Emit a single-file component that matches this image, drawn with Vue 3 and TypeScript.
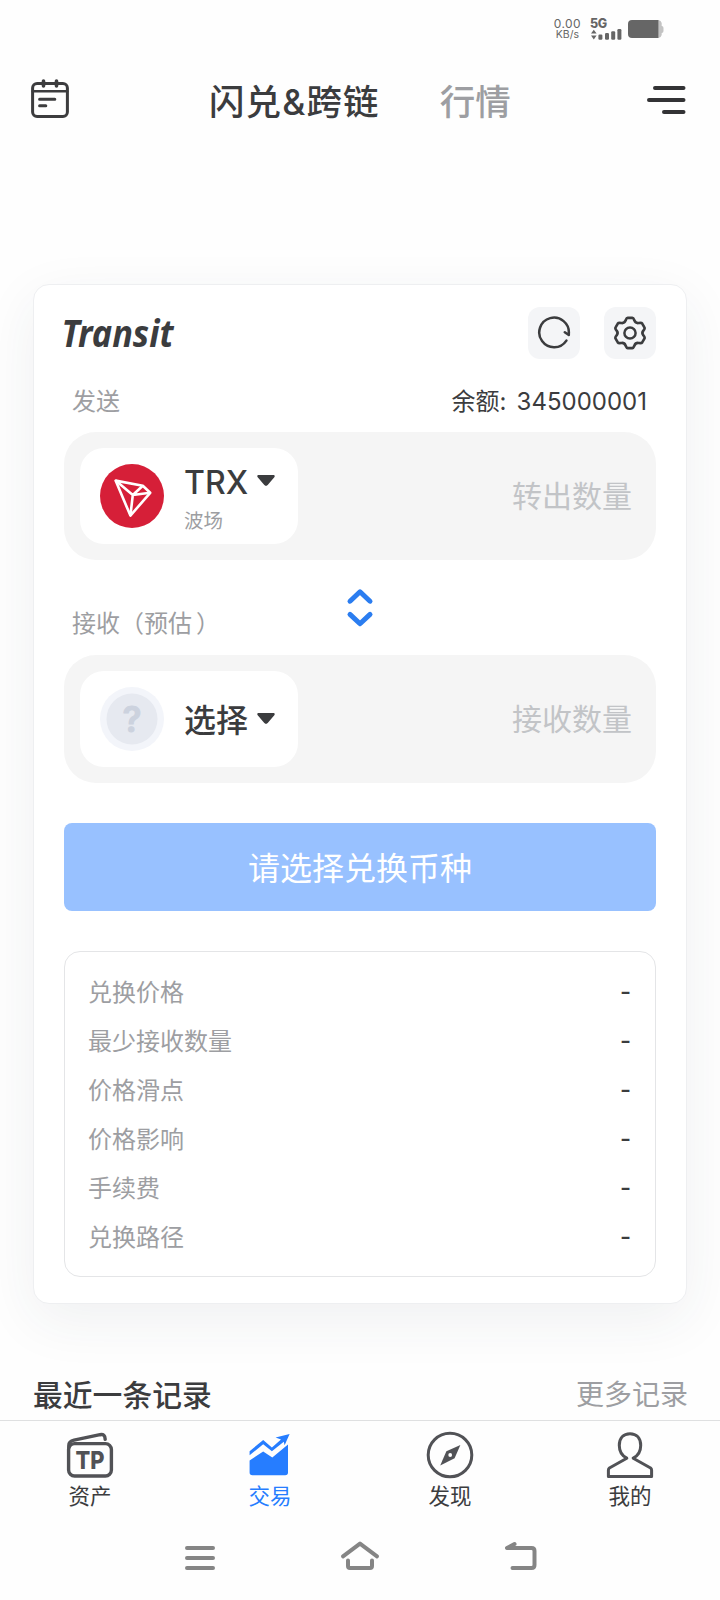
<script setup lang="ts">
interface Tab {
  id: string
  label: string
}

const details: string[] = ['兑换价格', '最少接收数量', '价格滑点', '价格影响', '手续费', '兑换路径']

const tabs: Tab[] = [
  { id: 'assets', label: '资产' },
  { id: 'trade', label: '交易' },
  { id: 'discover', label: '发现' },
  { id: 'mine', label: '我的' },
]

const activeTab = 'trade'
</script>

<template>
  <div class="screen">
    <div class="status">
      <div class="speed">
        <span class="rate">0.00</span>
        <span class="unit">KB/s</span>
      </div>
      <div class="network">
        <span class="net">5G</span>
        <svg class="signal" width="33" height="12" viewBox="0 9 33 12">
          <path d="M1 14.600 3.800 10.800 6.600 14.600ZM1 16.600 3.800 20.400 6.600 16.600Z" />
          <rect x="8.400" y="15.600" width="4" height="5.200" rx="1.200" />
          <rect x="15" y="14" width="4" height="6.800" rx="1.200" />
          <rect x="21.200" y="12.200" width="4" height="8.600" rx="1.200" />
          <rect x="27.400" y="10" width="4" height="10.800" rx="1.200" />
        </svg>
      </div>
      <svg class="battery" width="36" height="18" viewBox="0 0 36 18">
        <path d="M28 0h2.500a4 4 0 0 1 3.200 3v3a2 2 0 0 1 1.800 2v3a2 2 0 0 1-1.800 2v2a4 4 0 0 1-3.200 3H28Z" fill="#c3c3c3" />
        <path d="M4 0h26.400v18H4a4 4 0 0 1-4-4V4a4 4 0 0 1 4-4Z" fill="#666" />
      </svg>
    </div>

    <header class="header">
      <svg class="calendar" width="40" height="40" viewBox="0 0 40 40" fill="none" stroke="#3c3c3e" stroke-width="3" stroke-linecap="round">
        <rect x="2.600" y="4.600" width="34.800" height="32.800" rx="4.500" />
        <path d="M3 12.200h34" stroke-width="2.600" />
        <path d="M13.500 2v5M26.500 2v5" stroke-width="3.600" />
        <path d="M9.600 20.200h15.200M9.600 26.800h6.200" />
      </svg>
      <nav class="titles">
        <span class="title current">闪兑&amp;跨链</span>
        <span class="title">行情</span>
      </nav>
      <svg class="menu" width="40" height="30" viewBox="0 0 40 30" fill="none" stroke="#333335" stroke-width="4" stroke-linecap="round">
        <path d="M9 3H37.500M3 15H37.500M18 27H37.500" />
      </svg>
    </header>

    <main class="content">
      <section class="card">
        <div class="brand-row">
          <svg class="brand" width="116" height="44" viewBox="0 0 116 44">
            <text x="-2.500" y="35.500" textLength="112" lengthAdjust="spacingAndGlyphs">Transit</text>
          </svg>
          <div class="tools">
            <span class="tool">
              <svg width="36" height="36" viewBox="0 0 36 36" fill="none" stroke="#3b3c3e" stroke-width="2.500" stroke-linecap="round" stroke-linejoin="round">
                <path d="M30.400 25.600A14.800 14.800 0 1 1 32.800 18.800V20L28.800 17.200" />
              </svg>
            </span>
            <span class="tool">
              <svg width="36" height="36" viewBox="0 0 36 36" fill="none" stroke="#3b3c3e" stroke-width="2.500" stroke-linejoin="round">
                <path transform="translate(18 18) scale(1.060) translate(-18 -17)" d="M15.800 2.800h4.400c1.300 0 1.500 1.300 2 2.500.7 1.700 2 2.500 3.800 2.300 1.300-.2 2.800-.6 3.500.5l2.100 3.600c.7 1.100-.2 2.100-1 3.100-1.200 1.500-1.200 3 0 4.400.8 1 1.700 2 1 3.100l-2.100 3.600c-.7 1.100-2.200.7-3.500.5-1.800-.2-3.100.6-3.800 2.300-.5 1.200-.7 2.500-2 2.500h-4.400c-1.300 0-1.500-1.300-2-2.500-.7-1.700-2-2.500-3.800-2.300-1.300.2-2.800.6-3.500-.5l-2.100-3.600c-.7-1.100.2-2.100 1-3.100 1.200-1.500 1.200-3 0-4.400-.8-1-1.700-2-1-3.100l2.100-3.600c.7-1.100 2.200-.7 3.500-.5 1.800.2 3.100-.6 3.800-2.300.5-1.200.7-2.500 2-2.500Z" />
                <circle cx="18" cy="18" r="5.600" />
              </svg>
            </span>
          </div>
        </div>

        <div class="label-row send-label">
          <span class="label">发送</span>
          <span class="balance">余额<i class="colon">:</i>345000001</span>
        </div>
        <div class="field">
          <div class="picker">
            <svg width="64" height="64" viewBox="0 0 64 64">
              <circle cx="32" cy="32" r="32" fill="#d61f38" />
              <g fill="none" stroke="#fff" stroke-width="2.600" stroke-linejoin="round">
                <path d="M15.600 16.600 42.800 21.800 50.200 28.800 30.400 51.600Z" />
                <path d="M15.600 16.600 32.800 31 30.400 51.600M32.800 31 50.200 28.800M32.800 31 42.800 21.800" />
              </g>
            </svg>
            <div class="coin">
              <span class="symbol">TRX
                <svg class="caret" width="18" height="12" viewBox="0 0 18 12"><path d="M1.600 0h14.800c1.300 0 1.700 1.200.9 2.200l-6.600 7.900c-.9 1.100-2.500 1.100-3.400 0L.7 2.200C-.1 1.200.3 0 1.600 0Z" fill="#3b3c3e" /></svg>
              </span>
              <span class="chain">波场</span>
            </div>
          </div>
          <span class="placeholder">转出数量</span>
        </div>

        <div class="label-row receive-label">
          <span class="label">接收（预估<span class="closing">）</span></span>
          <svg class="swap" width="28" height="42" viewBox="0 0 28 42" fill="none" stroke="#2b7df0" stroke-width="5" stroke-linecap="round" stroke-linejoin="round">
            <path d="M4 14.200 14 4.800 24 14.200M4 27.400 14 36.800 24 27.400" />
          </svg>
        </div>
        <div class="field">
          <div class="picker">
            <svg width="64" height="64" viewBox="0 0 64 64">
              <circle cx="32" cy="32" r="32" fill="#f3f5fa" />
              <circle cx="32" cy="32" r="25.500" fill="#e6e9f0" />
              <text x="32" y="45" class="unknown">?</text>
            </svg>
            <div class="coin">
              <span class="symbol choose">选择
                <svg class="caret" width="18" height="12" viewBox="0 0 18 12"><path d="M1.600 0h14.800c1.300 0 1.700 1.200.9 2.200l-6.600 7.900c-.9 1.100-2.500 1.100-3.400 0L.7 2.200C-.1 1.200.3 0 1.600 0Z" fill="#3b3c3e" /></svg>
              </span>
            </div>
          </div>
          <span class="placeholder">接收数量</span>
        </div>

        <button class="submit" type="button">请选择兑换币种</button>

        <div class="details">
          <div v-for="item in details" :key="item" class="detail">
            <span>{{ item }}</span>
            <span class="value">-</span>
          </div>
        </div>
      </section>

      <div class="records">
        <span class="records-title">最近一条记录</span>
        <span class="records-more">更多记录</span>
      </div>
    </main>

    <nav class="tabbar">
      <div v-for="tab in tabs" :key="tab.id" class="tab" :class="{ active: tab.id === activeTab }">
        <svg v-if="tab.id === 'assets'" width="48" height="48" viewBox="0 0 48 48" fill="none" stroke="#515256" stroke-width="3.400" stroke-linecap="round">
          <rect x="2.600" y="12.600" width="42.800" height="32.400" rx="6" />
          <path d="M2.800 16.500V14.500C2.800 10.800 5 9.800 8 9.200L34 3.700c3.500-.6 5 .8 5.200 4.600" />
          <text x="24" y="37.600" class="wallet" textLength="29" lengthAdjust="spacingAndGlyphs">TP</text>
        </svg>
        <svg v-else-if="tab.id === 'trade'" width="48" height="48" viewBox="0 0 48 48" fill="#267dff">
          <path d="M3.600 29.400 17.200 20.600 26.300 26.600 42 13.600V41.500a2.800 2.800 0 0 1-2.800 2.800H6.400a2.800 2.800 0 0 1-2.800-2.800Z" />
          <path d="M3.600 20.200 17.200 9 25.900 16.400 35 8.400 29.600 6.400 43.600 3 38.600 14.200 37.800 10.800 25.900 20.200 17.200 13.200 3.600 24.200Z" />
        </svg>
        <svg v-else-if="tab.id === 'discover'" width="48" height="48" viewBox="0 0 48 48">
          <circle cx="24" cy="24" r="21.800" fill="none" stroke="#515256" stroke-width="3" />
          <path d="M34.400 14 28.600 27.200 14.200 34.600 20.400 20.200Z" fill="#515256" />
          <circle cx="24.200" cy="24" r="1.900" fill="#fff" />
        </svg>
        <svg v-else width="48" height="48" viewBox="0 0 48 48" fill="none" stroke="#515256" stroke-width="3" stroke-linejoin="round">
          <path d="M20.800 27.200C15.500 24.500 13.300 19.800 13.300 14.500 13.300 7 17.500 2.800 24 2.800S34.700 7 34.700 14.500c0 5.300-2.200 10-7.500 12.700L44.600 37c.7.500 1 1.300 1 2.200V45.400H2.400V39.200c0-.9.300-1.700 1-2.200Z" />
        </svg>
        <span class="tab-label">{{ tab.label }}</span>
      </div>
    </nav>

    <div class="system">
      <svg width="32" height="40" viewBox="0 0 32 40" class="sys">
        <path d="M3 10h26M3 20h26M3 30h26" />
      </svg>
      <svg width="40" height="40" viewBox="0 0 40 40" class="sys">
        <path d="M3 18.400 20 5.600 37 18.400M8 22.500V28q0 2 2 2H30q2 0 2-2V22.500" />
      </svg>
      <svg width="36" height="40" viewBox="0 0 36 40" class="sys">
        <path d="M11.500 6 4 10H28.500q3 0 3 3V27q0 3-3 3H9.500" />
      </svg>
    </div>
  </div>
</template>

<style>
body {
  margin: 0;
  background: #fefefe;
}
</style>

<style scoped>
.screen {
  display: flex;
  flex-direction: column;
  width: 720px;
  height: 1600px;
  overflow: hidden;
  background: #fefefe;
  color: #3b3c3e;
  font-family: Inter, "Noto Sans CJK SC", sans-serif;
}
.status {
  display: flex;
  justify-content: flex-end;
  height: 60px;
  padding-right: 56px;
  box-sizing: border-box;
}
.speed {
  display: flex;
  flex-direction: column;
  align-items: center;
  margin-top: 18px;
  color: #666;
}
.rate {
  font-size: 12px;
  line-height: 11px;
  letter-spacing: 0.4px;
}
.unit {
  font-size: 10.500px;
  line-height: 11px;
}
.network {
  display: flex;
  flex-direction: column;
  margin: 16px 0 0 9px;
}
.net {
  height: 12px;
  font-size: 12.500px;
  line-height: 15px;
  font-weight: 800;
  letter-spacing: -0.4px;
  color: #666;
}
.signal {
  fill: #666;
}
.battery {
  margin: 20px 0 0 5px;
}
.header {
  display: flex;
  align-items: center;
  height: 80px;
  padding: 0 34px 0 30px;
}
.calendar {
  margin-top: -2px;
}
.titles {
  display: flex;
  flex: 1;
  gap: 60px;
  margin: 6px 0 0 139px;
}
.title {
  font-size: 35.500px;
  line-height: 44px;
  font-weight: 500;
  color: #9d9ea2;
}
.title.current {
  letter-spacing: 1.100px;
  color: #3b3c3e;
}
.content {
  flex: 1;
  padding: 144px 33px 0;
}
.card {
  height: 1020px;
  padding: 22px 30px 25px;
  box-sizing: border-box;
  border: 1px solid #eeeff1;
  border-radius: 16px;
  background: #fff;
  box-shadow: 0 16px 56px rgba(40, 60, 66, 0.07);
}
.brand-row {
  display: flex;
  justify-content: space-between;
  align-items: center;
  height: 52px;
}
.brand {
  overflow: visible;
  fill: #3b3c3e;
  font: italic 700 37px "Noto Sans", "Open Sans", sans-serif;
}
.tools {
  display: flex;
  gap: 24px;
}
.tool {
  display: flex;
  align-items: center;
  justify-content: center;
  width: 52px;
  height: 52px;
  border-radius: 12px;
  background: #f4f5f7;
}
.label-row {
  display: flex;
  justify-content: space-between;
  padding: 0 9px 0 8px;
  font-size: 24px;
  line-height: 32px;
}
.send-label {
  height: 46px;
  margin-top: 27px;
}
.label {
  color: #9d9ea2;
}
.closing {
  margin-left: 4px;
}
.colon {
  display: inline-block;
  width: 17px;
  font-style: normal;
}
.field {
  display: flex;
  justify-content: space-between;
  align-items: center;
  height: 128px;
  padding: 0 24px 0 16px;
  box-sizing: border-box;
  border-radius: 32px;
  background: #f5f5f5;
}
.picker {
  display: flex;
  align-items: center;
  gap: 20px;
  width: 218px;
  height: 96px;
  padding-left: 20px;
  box-sizing: border-box;
  border-radius: 24px;
  background: #fff;
}
.coin {
  display: flex;
  flex-direction: column;
  padding-top: 4px;
}
.symbol {
  display: flex;
  align-items: center;
  gap: 9px;
  font-size: 32px;
  line-height: 46px;
  font-weight: 500;
}
.caret {
  margin-top: -4px;
}
.chain {
  font-size: 19.500px;
  line-height: 31px;
  color: #9d9ea2;
}
.placeholder {
  font-size: 30px;
  line-height: 40px;
  color: #c2c4c7;
}
.receive-label {
  position: relative;
  height: 95px;
  padding-top: 48px;
  box-sizing: border-box;
}
.swap {
  position: absolute;
  left: 50%;
  top: 27px;
  margin-left: -14px;
}
.unknown {
  font: 600 35px Inter, sans-serif;
  text-anchor: middle;
  fill: #ccd2de;
  stroke: #ccd2de;
  stroke-width: 1px;
  stroke-linejoin: round;
}
.submit {
  display: block;
  width: 100%;
  height: 88px;
  margin: 40px 0;
  padding: 3px 0 0;
  border: 0;
  border-radius: 8px;
  background: #98c1ff;
  color: #fff;
  font: 400 32px/44px Inter, "Noto Sans CJK SC", sans-serif;
}
.details {
  height: 326px;
  padding: 16px 24px 15px 23px;
  box-sizing: border-box;
  border: 1px solid #e4e5e7;
  border-radius: 16px;
}
.detail {
  display: flex;
  justify-content: space-between;
  height: 49px;
  font-size: 24px;
  line-height: 50px;
  color: #9d9ea2;
}
.value {
  margin-top: -1px;
  font-weight: 500;
  color: #3b3c3e;
}
.records {
  display: flex;
  justify-content: space-between;
  margin: 71px -1px 0 0;
  line-height: 40px;
}
.records-title {
  font-size: 29.800px;
  font-weight: 500;
}
.records-more {
  font-size: 28px;
  color: #9d9ea2;
}
.tabbar {
  display: flex;
  height: 100px;
  border-top: 1px solid #dfe0e1;
  background: #fefefe;
}
.tab {
  display: flex;
  flex: 1;
  flex-direction: column;
  align-items: center;
  padding-top: 10px;
}
.tab-label {
  font-size: 21.500px;
  line-height: 35px;
}
.active .tab-label {
  color: #267dff;
}
.wallet {
  font: 800 25px Inter, sans-serif;
  text-anchor: middle;
  fill: #515256;
  stroke: none;
}
.system {
  display: flex;
  justify-content: center;
  gap: 124px;
  height: 79px;
  padding: 17px 0 0 2px;
  box-sizing: border-box;
}
.sys {
  fill: none;
  stroke: #858585;
  stroke-width: 4;
  stroke-linecap: round;
  stroke-linejoin: round;
}
.sys:last-child {
  margin-left: -1px;
}
</style>
